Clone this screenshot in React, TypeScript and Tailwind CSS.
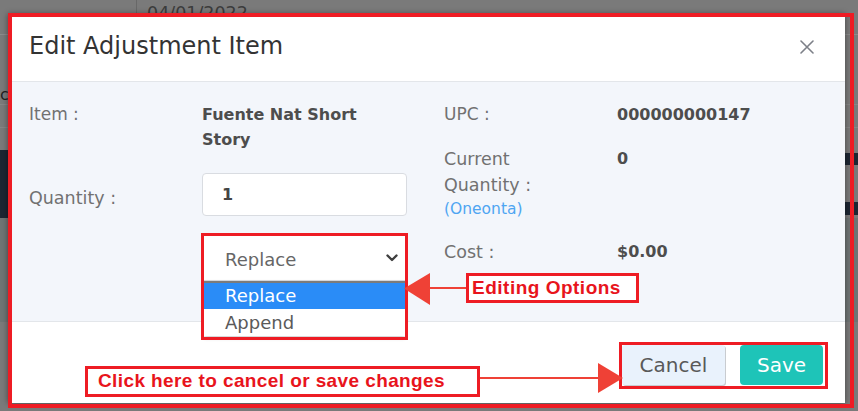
export default function App() {
  return (
    <div className="relative w-[858px] h-[411px] overflow-hidden bg-[#7a7a7a] font-['DejaVu_Sans',sans-serif]">
      {/* dimmed page behind the modal */}
      <div className="flex flex-col">
        <div className="h-[35px] flex border-b border-[#8c8c8c]">
          <div className="w-[137px] border-r border-[#686868]" />
          <div className="pl-[10px] pt-[2px] text-[17.5px] leading-[22px] text-[#3c3c3c]">04/01/2022</div>
        </div>
        <div className="h-[70px] border-b border-[#868686] flex items-end">
          <div className="w-[8px] overflow-hidden text-[16px] leading-[18px] text-[#222] whitespace-nowrap">
            <span className="inline-block w-[8px]">c</span>
          </div>
        </div>
        <div className="h-[23px] border-b border-[#868686]" />
        <div className="h-[22px]" />
        <div className="h-[68px] flex justify-between">
          <div className="w-[8px] bg-[#1c2632]" />
          <div className="w-[13px] flex flex-col justify-between py-[3px]">
            <div className="h-[12px] bg-[#1c2632]" />
            <div className="h-[13px] bg-[#1c2632]" />
          </div>
        </div>
        <div className="h-[104px] bg-[#6f7474]" />
      </div>

      {/* modal */}
      <div className="absolute left-[8px] top-[14px] w-[837px] h-[389px] bg-white flex flex-col shadow-[0_0_6px_rgba(0,0,0,0.45)]">
        <div className="h-[68px] shrink-0 flex items-center justify-between pl-[21px] pr-[31px] border-b border-[#e3e6ea]">
          <div className="text-[24px] leading-none text-[#333] pb-[3px]">Edit Adjustment Item</div>
          <svg width="14" height="14" viewBox="0 0 14 14" className="mb-[2px]">
            <path d="M1 1 L13 13 M13 1 L1 13" stroke="#7d8088" strokeWidth="1.6" strokeLinecap="round" />
          </svg>
        </div>

        <div className="h-[240px] shrink-0 bg-[#f3f6fb] border-b border-[#e3e6ea] flex pt-[20px]">
          {/* left column */}
          <div className="w-[436px] pl-[21px] flex flex-col">
            <div className="flex">
              <div className="w-[173px] text-[17px] leading-[25px] text-[#717171]">Item :</div>
              <div className="w-[205px] text-[16px] leading-[25px] font-bold text-[#4d4d4d]">
                Fuente Nat Short
                <br />
                Story
              </div>
            </div>
            <div className="flex items-center mt-[21px]">
              <div className="w-[173px] text-[17.5px] leading-[25px] text-[#717171] pt-[7px]">Quantity :</div>
              <div className="w-[205px] h-[43px] bg-white border border-[#d9dce1] rounded-[4px] flex items-center pl-[19px] text-[16px] font-bold text-[#444]">
                1
              </div>
            </div>
            <div className="flex mt-[18px]">
              <div className="w-[173px]" />
              <div className="relative w-[205px] h-[47px] bg-white border border-[#d9dce1] rounded-t-[4px] flex items-center justify-between pl-[22px] pr-[8px]">
                <span className="text-[18px] text-[#666] pt-[3px]">Replace</span>
                <svg width="12" height="8" viewBox="0 0 12 8">
                  <path d="M1.5 1.5 L6 6 L10.5 1.5" stroke="#3f3f3f" strokeWidth="2.4" fill="none" strokeLinecap="round" strokeLinejoin="round" />
                </svg>
                <div className="absolute left-[1px] right-[1px] top-[46px] bg-white border-t-2 border-[#7b7b7b] flex flex-col shadow-[0_2px_4px_rgba(0,0,0,0.2)]">
                  <div className="h-[26px] bg-[#2a8cf7] text-white text-[18px] leading-[26px] pl-[21px]">Replace</div>
                  <div className="h-[27px] text-[#5a5a5a] text-[18px] leading-[27px] pl-[21px]">Append</div>
                </div>
              </div>
            </div>
          </div>

          {/* right column */}
          <div className="flex flex-col">
            <div className="flex">
              <div className="w-[173px] text-[17px] leading-[25px] text-[#717171]">UPC :</div>
              <div className="text-[16px] leading-[25px] font-bold text-[#4d4d4d]">000000000147</div>
            </div>
            <div className="flex mt-[19px]">
              <div className="w-[173px] flex flex-col">
                <div className="text-[17.5px] leading-[26px] text-[#717171]">Current</div>
                <div className="text-[17.5px] leading-[26px] text-[#717171]">Quantity :</div>
                <div className="text-[15.5px] leading-[22px] text-[#4ea5f2]">(Oneonta)</div>
              </div>
              <div className="text-[16px] leading-[26px] font-bold text-[#4d4d4d]">0</div>
            </div>
            <div className="flex mt-[19px]">
              <div className="w-[173px] text-[17.5px] leading-[26px] text-[#717171]">Cost :</div>
              <div className="text-[16px] leading-[26px] font-bold text-[#4d4d4d]">$0.00</div>
            </div>
          </div>
        </div>

        <div className="flex-1 flex justify-end items-start pt-[23px] pr-[22px] gap-[15px]">
          <div className="w-[103px] h-[40px] rounded-[3px] bg-[#e9f2fc] shadow-[1px_1px_0_#c9ccd0] flex items-center justify-center text-[20px] text-[#595959]">
            Cancel
          </div>
          <div className="w-[83px] h-[40px] rounded-[4px] bg-[#1ec4b8] flex items-center justify-center text-[20px] text-white">
            Save
          </div>
        </div>
      </div>

      {/* annotations */}
      <div className="absolute left-[8px] top-[13px] w-[846px] h-[395px] border-[4px] border-[#ee1c24]" />
      <div className="absolute left-[201px] top-[233px] w-[207px] h-[107px] border-[3px] border-[#ee1c24]" />
      <div className="absolute left-[619px] top-[342px] w-[209px] h-[47px] border-[3px] border-[#ee1c24]" />

      <svg className="absolute left-[400px] top-[270px]" width="70" height="40" viewBox="0 0 70 40">
        <path d="M29 18 L66 18" stroke="#ef4136" strokeWidth="2" />
        <path d="M4 18.5 L30 3 L30 35 Z" fill="#ef4136" />
      </svg>
      <div className="absolute left-[466px] top-[273px] w-[173px] h-[30px] border-[3px] border-[#ee1c24] bg-white flex items-center pl-[3px] font-['Liberation_Sans',Arial,sans-serif] font-bold text-[19px] tracking-[0.5px] text-[#e8141c]">
        Editing Options
      </div>

      <svg className="absolute left-[476px] top-[360px]" width="150" height="36" viewBox="0 0 150 36">
        <path d="M2 18 L124 18" stroke="#ef4136" strokeWidth="2" />
        <path d="M147 18 L122 3 L122 33 Z" fill="#ef4136" />
      </svg>
      <div className="absolute left-[85px] top-[366px] w-[395px] h-[31px] border-[3px] border-[#ee1c24] bg-white flex items-center pl-[10px] font-['Liberation_Sans',Arial,sans-serif] font-bold text-[19px] tracking-[0.4px] text-[#e8141c]">
        Click here to cancel or save changes
      </div>
    </div>
  );
}
